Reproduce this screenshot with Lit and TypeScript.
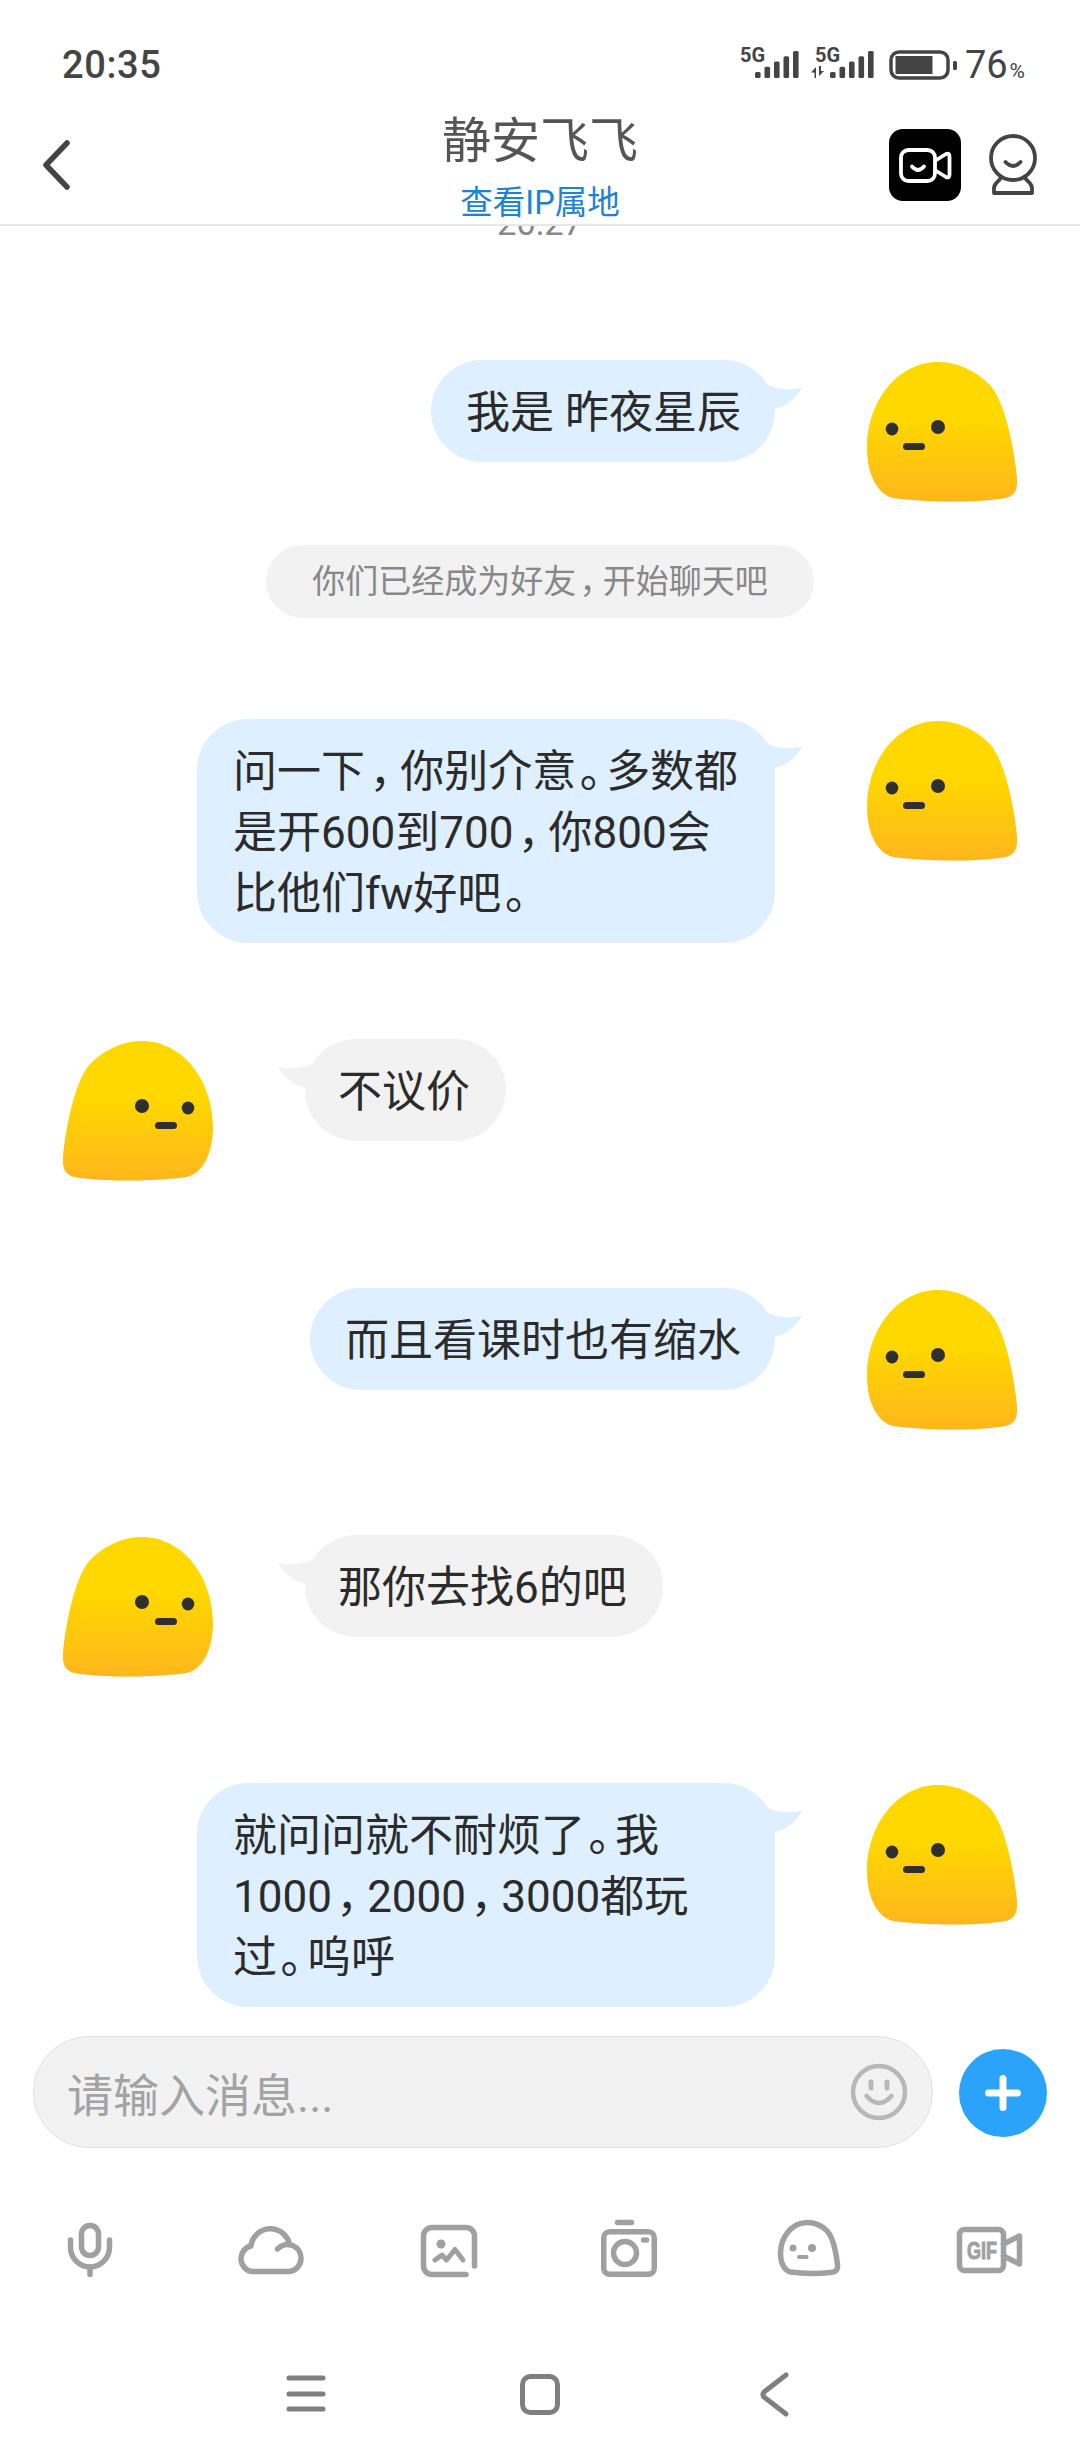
import { LitElement, html, svg, css } from "lit";
import { customElement } from "lit/decorators.js";

type Msg = { side: "me" | "them"; lines: string[]; top: number };

const FEED: (Msg | { notice: string; top: number })[] = [
  { side: "me", lines: ["我是 昨夜星辰"], top: 117 },
  { notice: "你们已经成为好友，开始聊天吧", top: 43 },
  { side: "me", lines: ["问一下，你别介意。多数都", "是开600到700，你800会", "比他们fw好吧。"], top: 101 },
  { side: "them", lines: ["不议价"], top: 96 },
  { side: "me", lines: ["而且看课时也有缩水"], top: 107 },
  { side: "them", lines: ["那你去找6的吧"], top: 105 },
  { side: "me", lines: ["就问问就不耐烦了。我", "1000，2000，3000都玩", "过。呜呼"], top: 106 },
];

// 句読点は実機フォントだと幅が狭いので span で詰める
const withPunct = (line: string) =>
  line.split(/([，。])/).map((part) => {
    if (part === "，") return html`<span class="comma">${part}</span>`;
    if (part === "。") return html`<span class="stop">${part}</span>`;
    return part;
  });

const signal = (label: string, arrows: boolean) => html`
  <svg class="signal" width="66" height="34" viewBox="0 0 66 34">
    <text x=${arrows ? 6 : 2} y="17" class="net">${label}</text>
    ${arrows
      ? svg`<path d="M2 27.500 L7 22 V33 H5.500 V27.500 Z M10 21 V31 L15 26 H12 V21 Z" fill="#444"/>`
      : null}
    ${[0, 1, 2, 3, 4].map((i) => {
      const x = (arrows ? 21 : 17) + i * 9.5;
      const top = 27 - i * 5.25;
      return svg`<rect x=${x} y=${top} width="5.600" height=${33 - top} rx="1.500" fill="#444"/>`;
    })}
  </svg>
`;

const blob = () => html`
  <svg class="avatar" width="150" height="140" viewBox="0 0 150 140">
    <defs>
      <linearGradient id="skin" x1="0" y1="0" x2="0" y2="1">
        <stop offset="0.4" stop-color="#ffd800"></stop>
        <stop offset="1" stop-color="#ffb61d"></stop>
      </linearGradient>
    </defs>
    <path
      d="M71 0 C90 0 108 8 123 23 C138 40 147 85 150 115 C151 130 147 136 132 137 C100 141 55 140 26 136 C10 132 0 112 0 86 C0 40 30 0 71 0 Z"
      fill="url(#skin)"
    ></path>
    <ellipse cx="25" cy="67" rx="6.300" ry="6.500" fill="#2f2f2f"></ellipse>
    <ellipse cx="71" cy="65" rx="7" ry="7" fill="#2f2f2f"></ellipse>
    <rect x="36" y="81" width="22" height="7" rx="3.500" fill="#2f2f2f"></rect>
  </svg>
`;

@customElement("app-root")
export class AppRoot extends LitElement {
  static styles = css`
    :host {
      display: flex;
      flex-direction: column;
      width: 1080px;
      height: 2460px;
      background: #fff;
      overflow: hidden;
      font-family: Roboto, "Noto Sans CJK SC", sans-serif;
      color: #333;
    }
    svg {
      display: block;
      flex: none;
    }

    /* status bar */
    .status {
      height: 100px;
      box-sizing: border-box;
      padding: 30px 55px 0 62px;
      display: flex;
      justify-content: space-between;
      align-items: center;
      flex: none;
    }
    .clock {
      font-size: 38px;
      font-weight: 500;
      letter-spacing: 0.6px;
      color: #444;
    }
    .status-right {
      display: flex;
      align-items: center;
    }
    .net {
      font: 700 20px Roboto, sans-serif;
      fill: #444;
    }
    .signal {
      margin: -6px 5px 0 0;
    }
    .battery {
      margin-left: 9px;
    }
    .pct {
      font-size: 38px;
      color: #444;
      margin-left: 8px;
    }
    .pct small {
      font-size: 21px;
      margin-left: 2px;
    }

    /* header */
    .header {
      height: 126px;
      box-sizing: border-box;
      padding-top: 6px;
      border-bottom: 2px solid #e7e7e7;
      display: grid;
      grid-template-columns: 1fr auto 1fr;
      align-items: center;
      flex: none;
    }
    .back {
      margin-left: 40px;
    }
    .title-box {
      text-align: center;
      padding-top: 4px;
    }
    .title {
      font-size: 49px;
      line-height: 62px;
      color: #555;
    }
    .ip {
      font-size: 32.500px;
      line-height: 40px;
      margin-top: 10px;
      color: #1e82d2;
    }
    .header-right {
      display: flex;
      justify-content: flex-end;
      align-items: center;
      gap: 26px;
      padding-right: 41px;
    }

    /* chat */
    .chat {
      flex: 1;
      min-height: 0;
      overflow: hidden;
      display: flex;
      flex-direction: column;
    }
    .time {
      margin-top: -23px;
      height: 40px;
      line-height: 40px;
      font-size: 34.500px;
      text-align: center;
      color: #888;
      flex: none;
    }
    .row {
      display: flex;
      align-items: flex-start;
      gap: 92px;
      padding: 0 63px;
      flex: none;
    }
    .row.me {
      justify-content: flex-end;
    }
    .row.them {
      flex-direction: row-reverse;
      justify-content: flex-end;
    }
    .avatar {
      margin-top: 2px;
    }
    .them .avatar {
      transform: scaleX(-1);
    }
    .bubble {
      position: relative;
      padding: 23px 34px 18px 35px;
      border-radius: 51px;
      font-size: 44px;
      line-height: 61px;
      color: #2b2b2b;
    }
    .bubble.wrapped {
      box-sizing: border-box;
      width: 578px;
      padding-left: 36px;
    }
    .line {
      white-space: pre;
    }
    .me .bubble {
      background: #deefff;
    }
    .them .bubble {
      background: #f2f2f2;
      padding-left: 33px;
      padding-right: 36px;
    }
    .tail {
      position: absolute;
      top: 18px;
      right: -27px;
      fill: #deefff;
    }
    .them .tail {
      right: auto;
      left: -27px;
      transform: scaleX(-1);
      fill: #f2f2f2;
    }
    .comma {
      margin-left: 0.1em;
      letter-spacing: -0.3em;
    }
    .stop {
      margin-left: 0.08em;
      letter-spacing: -0.4em;
    }
    .notice {
      align-self: center;
      flex: none;
      height: 73px;
      line-height: 73px;
      padding: 0 46px;
      border-radius: 37px;
      background: #f2f2f2;
      color: #888;
      font-size: 33px;
    }

    /* composer */
    .composer {
      flex: none;
      height: 166px;
      box-sizing: border-box;
      padding: 16px 33px 0;
      display: flex;
      align-items: flex-start;
      gap: 26px;
    }
    .input {
      box-sizing: border-box;
      width: 900px;
      height: 112px;
      border: 1.500px solid #e0e0e0;
      border-radius: 56px;
      background: #f2f2f2;
      display: flex;
      align-items: center;
      justify-content: space-between;
      padding: 0 24px 0 33px;
      font-size: 46px;
      color: #a3a3a3;
    }
    .plus {
      width: 88px;
      height: 88px;
      margin-top: 13px;
      border-radius: 50%;
      background: #2ba3fb;
      display: flex;
      align-items: center;
      justify-content: center;
    }

    /* tools */
    .tools {
      flex: none;
      height: 124px;
      box-sizing: border-box;
      padding-top: 32px;
      display: grid;
      grid-template-columns: repeat(6, 180px);
      justify-items: center;
      align-items: start;
    }
    .tool {
      fill: none;
      stroke: #a0a0a0;
      stroke-width: 5.500px;
      stroke-linecap: round;
      stroke-linejoin: round;
    }
    .tool .solid {
      fill: #a0a0a0;
      stroke: none;
    }
    .gif {
      font: 700 24px "Liberation Sans", sans-serif;
      fill: #a0a0a0;
      stroke: #a0a0a0;
      stroke-width: 1px;
    }

    /* nav */
    .nav {
      flex: none;
      height: 150px;
      box-sizing: border-box;
      display: flex;
      justify-content: center;
      align-items: flex-start;
      gap: 184px;
      padding-top: 60px;
    }
    .nav svg {
      fill: none;
      stroke: #7f7f7f;
      stroke-width: 5px;
      stroke-linecap: round;
      stroke-linejoin: round;
    }
  `;

  private renderRow(m: Msg) {
    return html`
      <div class="row ${m.side}" style="margin-top:${m.top}px">
        <div class="bubble ${m.lines.length > 1 ? "wrapped" : ""}">
          <svg class="tail" width="41" height="34" viewBox="0 0 41 34">
            <path d="M0 2 C8 10 24 13 41 10 C34 22 24 29 13 31 L0 31 Z"></path>
          </svg>
          ${m.lines.map((l) => html`<div class="line">${withPunct(l)}</div>`)}
        </div>
        ${blob()}
      </div>
    `;
  }

  render() {
    return html`
      <div class="status">
        <span class="clock">20:35</span>
        <div class="status-right">
          ${signal("5G", false)} ${signal("5G", true)}
          <svg class="battery" width="68" height="30" viewBox="0 0 68 30">
            <rect x="2" y="2" width="57" height="26" rx="8" fill="none" stroke="#444" stroke-width="3.500"></rect>
            <rect x="6.500" y="6" width="37" height="18" fill="#444"></rect>
            <rect x="64" y="11" width="4" height="9" rx="1.500" fill="#444"></rect>
          </svg>
          <span class="pct">76<small>%</small></span>
        </div>
      </div>

      <div class="header">
        <svg class="back" width="32" height="50" viewBox="0 0 32 50" fill="none" stroke="#444" stroke-width="5.500" stroke-linecap="round" stroke-linejoin="round">
          <path d="M27 3 L6 25 L27 47"></path>
        </svg>
        <div class="title-box">
          <div class="title">静安飞飞</div>
          <div class="ip">查看IP属地</div>
        </div>
        <div class="header-right">
          <svg width="72" height="72" viewBox="0 0 72 72">
            <rect width="72" height="72" rx="14" fill="#000"></rect>
            <g fill="none" stroke="#fff" stroke-width="3.800" stroke-linecap="round" stroke-linejoin="round">
              <rect x="12" y="21" width="34" height="31" rx="7.500"></rect>
              <path d="M46.500 31.500 L57 25 Q60.500 23.500 60.500 27.500 V45.500 Q60.500 49.500 57 48 L46.500 41.500"></path>
              <path d="M23 37.500 Q29 44.500 35 37.500"></path>
            </g>
          </svg>
          <svg width="52" height="64" viewBox="0 0 52 64" fill="none" stroke="#444" stroke-width="3.800" stroke-linecap="round" stroke-linejoin="round">
            <circle cx="26" cy="25" r="22"></circle>
            <path d="M14 43.500 C14 48 7 49 7 55 V60 H45 V55 C45 49 38 48 38 43.500"></path>
            <path d="M18.500 29 Q26 37 33.500 29"></path>
          </svg>
        </div>
      </div>

      <div class="chat">
        <div class="time">20:27</div>
        ${FEED.map((item) =>
          "notice" in item
            ? html`<div class="notice" style="margin-top:${item.top}px">${withPunct(item.notice)}</div>`
            : this.renderRow(item),
        )}
      </div>

      <div class="composer">
        <div class="input">
          <span>请输入消息...</span>
          <svg width="58" height="58" viewBox="0 0 58 58" fill="none" stroke="#b8b8b8" stroke-width="4.500" stroke-linecap="round">
            <circle cx="29" cy="29" r="26"></circle>
            <path d="M21 19 V25 M37 19 V25" stroke-width="5"></path>
            <path d="M16.500 33 Q29 47 41.500 33"></path>
          </svg>
        </div>
        <div class="plus">
          <svg width="36" height="36" viewBox="0 0 36 36" stroke="#fff" stroke-width="7" stroke-linecap="round">
            <path d="M18 3.500 V32.500 M3.500 18 H32.500"></path>
          </svg>
        </div>
      </div>

      <div class="tools">
        <svg class="tool" width="80" height="64" viewBox="0 0 80 64">
          <rect x="31.500" y="7.500" width="17" height="30" rx="8.500"></rect>
          <path d="M20.500 22 V29 A19.500 20 0 0 0 59.500 29 V22"></path>
          <path d="M40 49 V56.500"></path>
        </svg>
        <svg class="tool" width="80" height="64" viewBox="0 0 80 64">
          <path d="M22 53.500 H58 A13 13 0 0 0 71 40.500 A13.500 13.500 0 0 0 47.500 31"></path>
          <path d="M22 53.500 A13 13 0 0 1 21 28 A19.500 19.500 0 0 1 59.500 26.500"></path>
        </svg>
        <svg class="tool" width="80" height="64" viewBox="0 0 80 64">
          <path d="M64.500 48 V18 A8.500 8.500 0 0 0 56 9.500 H22 A8.500 8.500 0 0 0 13.500 18 V48 A8.500 8.500 0 0 0 22 56.500 H56"></path>
          <circle class="solid" cx="31" cy="26" r="4.500"></circle>
          <path d="M25 42 L32 37 L36.500 42 L45 31.500 L53 42" stroke-width="5"></path>
        </svg>
        <svg class="tool" width="80" height="64" viewBox="0 0 80 64">
          <path d="M27.500 4.500 H41.500"></path>
          <rect x="13.750" y="13.750" width="50.500" height="42.500" rx="6"></rect>
          <circle cx="35" cy="35" r="11.500"></circle>
          <path d="M53.500 22 H56.500"></path>
        </svg>
        <svg class="tool" width="80" height="64" viewBox="0 0 80 64">
          <path d="M37.500 4.500 C44.700 4.500 51.500 7.400 57 12.900 C63 19 66.400 35.400 67.500 46.400 C67.900 51.800 66.400 54 60.700 54.400 C48.500 55.800 31.400 55.500 20.400 54 C14.300 52.500 10.500 45 10.500 35.800 C10.500 19 21.900 4.500 37.500 4.500 Z"></path>
          <circle class="solid" cx="23" cy="30" r="3.500"></circle>
          <circle class="solid" cx="42" cy="30" r="4"></circle>
          <path d="M29 39 H36.500" stroke-width="4"></path>
        </svg>
        <svg class="tool" width="80" height="64" viewBox="0 0 80 64">
          <rect x="9.500" y="11.500" width="44" height="41" rx="5"></rect>
          <path d="M53.500 26 L69.500 18 V46 L53.500 38"></path>
          <text class="gif" x="17" y="41" textLength="30" lengthAdjust="spacingAndGlyphs">GIF</text>
        </svg>
      </div>

      <div class="nav">
        <svg width="50" height="50" viewBox="0 0 50 50">
          <path d="M8 8 H42 M8 24 H42 M8 39 H42"></path>
        </svg>
        <svg width="50" height="50" viewBox="0 0 50 50">
          <rect x="7.500" y="6.500" width="35" height="36" rx="8"></rect>
        </svg>
        <svg width="50" height="50" viewBox="0 0 50 50">
          <path d="M37 5 L15 22 Q13 24.500 15 27 L37 44"></path>
        </svg>
      </div>
    `;
  }
}
